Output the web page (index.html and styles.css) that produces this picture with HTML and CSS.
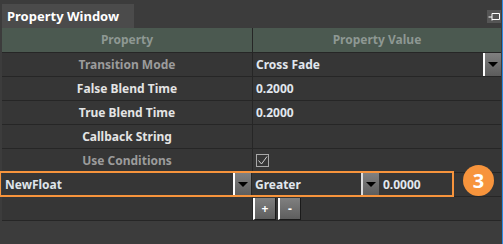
FILE: index.html
```html
<!DOCTYPE html>
<html lang="en">
<head>
    <meta charset="UTF-8">
    <title>Property Window</title>
    <link rel="stylesheet" href="styles.css">
</head>
<body>
    <div class="window">
        <div class="tabbar">
            <div class="tab">Property Window</div>
            <span class="pin">
                <svg width="12" height="12" viewBox="0 0 12 12">
                    <path d="M0.5 6H4M4 2.5V9.5M4 2.5H11.5V8.5H4" fill="none" stroke="#fff" stroke-width="1"/>
                </svg>
            </span>
        </div>

        <div class="grid">
            <div class="row head">
                <div class="name">Property</div>
                <div class="value center">Property Value</div>
            </div>
            <div class="row">
                <div class="name dim">Transition Mode</div>
                <div class="value combo">
                    <span>Cross Fade</span>
                    <span class="drop"></span>
                </div>
            </div>
            <div class="row">
                <div class="name">False Blend Time</div>
                <div class="value">0.2000</div>
            </div>
            <div class="row">
                <div class="name">True Blend Time</div>
                <div class="value">0.2000</div>
            </div>
            <div class="row">
                <div class="name">Callback String</div>
                <div class="value"></div>
            </div>
            <div class="row">
                <div class="name dim">Use Conditions</div>
                <div class="value">
                    <span class="check">
                        <svg width="11" height="11" viewBox="0 0 11 11">
                            <path d="M1.5 5.5L4.5 9L10 1.5" fill="none" stroke="#cfcfcf" stroke-width="1"/>
                        </svg>
                    </span>
                </div>
            </div>
            <div class="row cond">
                <div class="name left combo">
                    <span>NewFloat</span>
                    <span class="drop"></span>
                </div>
                <div class="value split">
                    <div class="combo op">
                        <span>Greater</span>
                        <span class="drop"></span>
                    </div>
                    <div class="num">0.0000</div>
                </div>
                <div class="mark"></div>
                <div class="badge">3</div>
            </div>
            <div class="row">
                <div class="name"></div>
                <div class="value buttons">
                    <button class="btn">+</button>
                    <button class="btn">-</button>
                </div>
            </div>
        </div>
    </div>
</body>
</html>
```

FILE: styles.css
```css
body {
    margin: 0;
    background-color: #3c3c3c;
    font-family: "Noto Sans", "DejaVu Sans", sans-serif;
    font-size: 12px;
}
.window {
    width: 502px;
    height: 244px;
    border-right: 1px solid #2f8ae0;
}
.tabbar {
    display: flex;
    align-items: flex-end;
    justify-content: space-between;
    height: 28px;
    padding-left: 2px;
}
.tab {
    width: 132px;
    height: 24px;
    line-height: 24px;
    padding-left: 5px;
    box-sizing: border-box;
    background-color: #4b4b4b;
    color: #ffffff;
    font-weight: bold;
    font-size: 13px;
}
.pin {
    display: flex;
    align-items: center;
    justify-content: center;
    width: 14px;
    height: 13px;
    margin-bottom: 5px;
    margin-right: 1px;
    background-color: #555555;
}
.grid {
    margin-left: 2px;
    width: 499px;
    background-color: #363636;
}
.row {
    position: relative;
    display: flex;
    height: 23px;
    border-bottom: 1px solid #262626;
}
.name {
    width: 250px;
    border-right: 1px solid #262626;
    text-align: center;
    line-height: 23px;
    color: #e4e4e4;
    font-weight: bold;
}
.name.dim {
    color: #9c9c9c;
}
.value {
    flex: 1;
    padding-left: 3px;
    line-height: 23px;
    color: #e1e7ee;
    font-weight: bold;
}
.value.center {
    text-align: center;
    padding-left: 0;
}
.head {
    height: 24px;
    border-bottom: 1px solid #262626;
    background-color: #4b5950;
}
.head .name, .head .value {
    color: #8e9893;
    line-height: 24px;
}
.combo {
    display: flex;
    justify-content: space-between;
    align-items: stretch;
}
.name.left {
    text-align: left;
    padding-left: 3px;
    box-sizing: border-box;
    color: #dfe4ea;
}
.drop {
    position: relative;
    width: 16px;
    border-left: 2px solid #ffffff;
    background: linear-gradient(#808080, #5c5c5c);
}
.drop::after {
    content: "";
    position: absolute;
    left: 3px;
    top: 9px;
    border-left: 5px solid transparent;
    border-right: 5px solid transparent;
    border-top: 5px solid #000000;
}
.split {
    display: flex;
    padding-left: 0;
}
.op {
    width: 124px;
    padding-left: 3px;
}
.op .drop {
    border-left-color: #dcdcdc;
}
.num {
    padding-left: 4px;
}
.check {
    display: inline-flex;
    align-items: center;
    justify-content: center;
    width: 11px;
    height: 11px;
    margin-top: 5px;
    border: 1px solid #a8a8a8;
    vertical-align: top;
}
.buttons {
    display: flex;
    gap: 2px;
    padding-left: 0;
}
.btn {
    width: 23px;
    height: 22px;
    margin-top: 1px;
    padding: 0;
    border: none;
    border-left: 2px solid #ffffff;
    border-right: 1px solid #1a1a1a;
    border-bottom: 1px solid #1a1a1a;
    background: linear-gradient(#808080, #5e5e5e);
    color: #ffffff;
    font-family: "Noto Sans", sans-serif;
    font-size: 12px;
    font-weight: bold;
}
.mark {
    position: absolute;
    left: -3px;
    top: -2px;
    width: 451px;
    height: 22px;
    border: 2px solid #f7943c;
}
.badge {
    position: absolute;
    left: 461px;
    top: -8px;
    width: 31px;
    height: 31px;
    border-radius: 50%;
    background-color: #f7943c;
    color: #ffffff;
    font-size: 20px;
    font-weight: bold;
    text-align: center;
    line-height: 31px;
}
```
